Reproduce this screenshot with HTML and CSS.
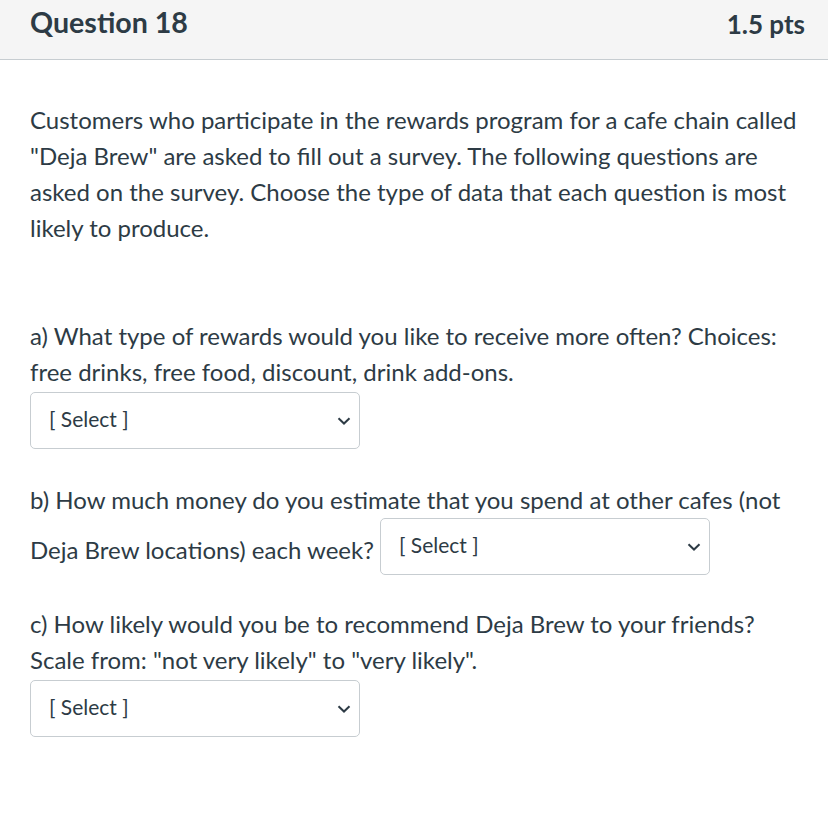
FILE: index.html
```html
<!DOCTYPE html>
<html>
<head>
<meta charset="utf-8">
<link rel="stylesheet" href="styles.css">
</head>
<body>
<div class="question">
  <div class="header">
    <h2 class="title">Question 18</h2>
    <div class="pts">1.5 pts</div>
  </div>
  <div class="content">
    <p class="intro">Customers who participate in the rewards program for a cafe chain called "Deja Brew" are asked to fill out a survey. The following questions are asked on the survey. Choose the type of data that each question is most likely to produce.</p>
    <p class="q qa">a) What type of rewards would you like to receive more often? Choices: free drinks, free food, discount, drink add-ons.</p>
    <div class="select block"><span>[ Select ]</span><svg class="chev" viewBox="0 0 14 8" width="14" height="8"><path d="M1.5 1.2 L7 6.5 L12.5 1.2" fill="none" stroke="#2d3b45" stroke-width="2"/></svg></div>
    <p class="q qb">b) How much money do you estimate that you spend at other cafes (not Deja Brew locations) each week? <span class="select inline"><span>[ Select ]</span><svg class="chev" viewBox="0 0 14 8" width="14" height="8"><path d="M1.5 1.2 L7 6.5 L12.5 1.2" fill="none" stroke="#2d3b45" stroke-width="2"/></svg></span></p>
    <p class="q qc">c) How likely would you be to recommend Deja Brew to your friends? Scale from: "not very likely" to "very likely".</p>
    <div class="select block"><span>[ Select ]</span><svg class="chev" viewBox="0 0 14 8" width="14" height="8"><path d="M1.5 1.2 L7 6.5 L12.5 1.2" fill="none" stroke="#2d3b45" stroke-width="2"/></svg></div>
  </div>
</div>
</body>
</html>
```
FILE: styles.css
```css
html, body {
  margin: 0;
  padding: 0;
  background: #ffffff;
}
body {
  font-family: Lato, "Open Sans", sans-serif;
  color: #2d3b45;
}
.header {
  height: 59px;
  background: #f5f5f5;
  border-bottom: 1px solid #c7cdd1;
  display: flex;
  justify-content: space-between;
  align-items: center;
  padding: 0 23px 0 30px;
}
.title {
  margin: 0;
  font-size: 28.6px;
  font-weight: 700;
  position: relative;
  top: -8px;
}
.pts {
  font-size: 26px;
  font-weight: 700;
  position: relative;
  top: -6px;
}
.content {
  padding: 0 26px 0 30px;
}
p {
  margin: 0;
  font-size: 24px;
  line-height: 36px;
}
.intro {
  margin-top: 42px;
}
.qa {
  margin-top: 72px;
}
.qb {
  margin-top: 33px;
}
.qc {
  margin-top: 31px;
}
.select {
  box-sizing: border-box;
  width: 330px;
  height: 57px;
  border: 1px solid #c7cdd1;
  border-radius: 5px;
  background: #fff;
  display: flex;
  align-items: center;
  justify-content: space-between;
  padding: 0 8px 0 18px;
  font-size: 21px;
  color: #2d3b45;
}
.select.block {
  margin-top: 2px;
}
.select.inline {
  display: inline-flex;
  vertical-align: 4px;
  margin-left: 0;
  line-height: normal;
}
.select span {
  position: relative;
  top: -2px;
}
.chev {
  flex: none;
}
```
